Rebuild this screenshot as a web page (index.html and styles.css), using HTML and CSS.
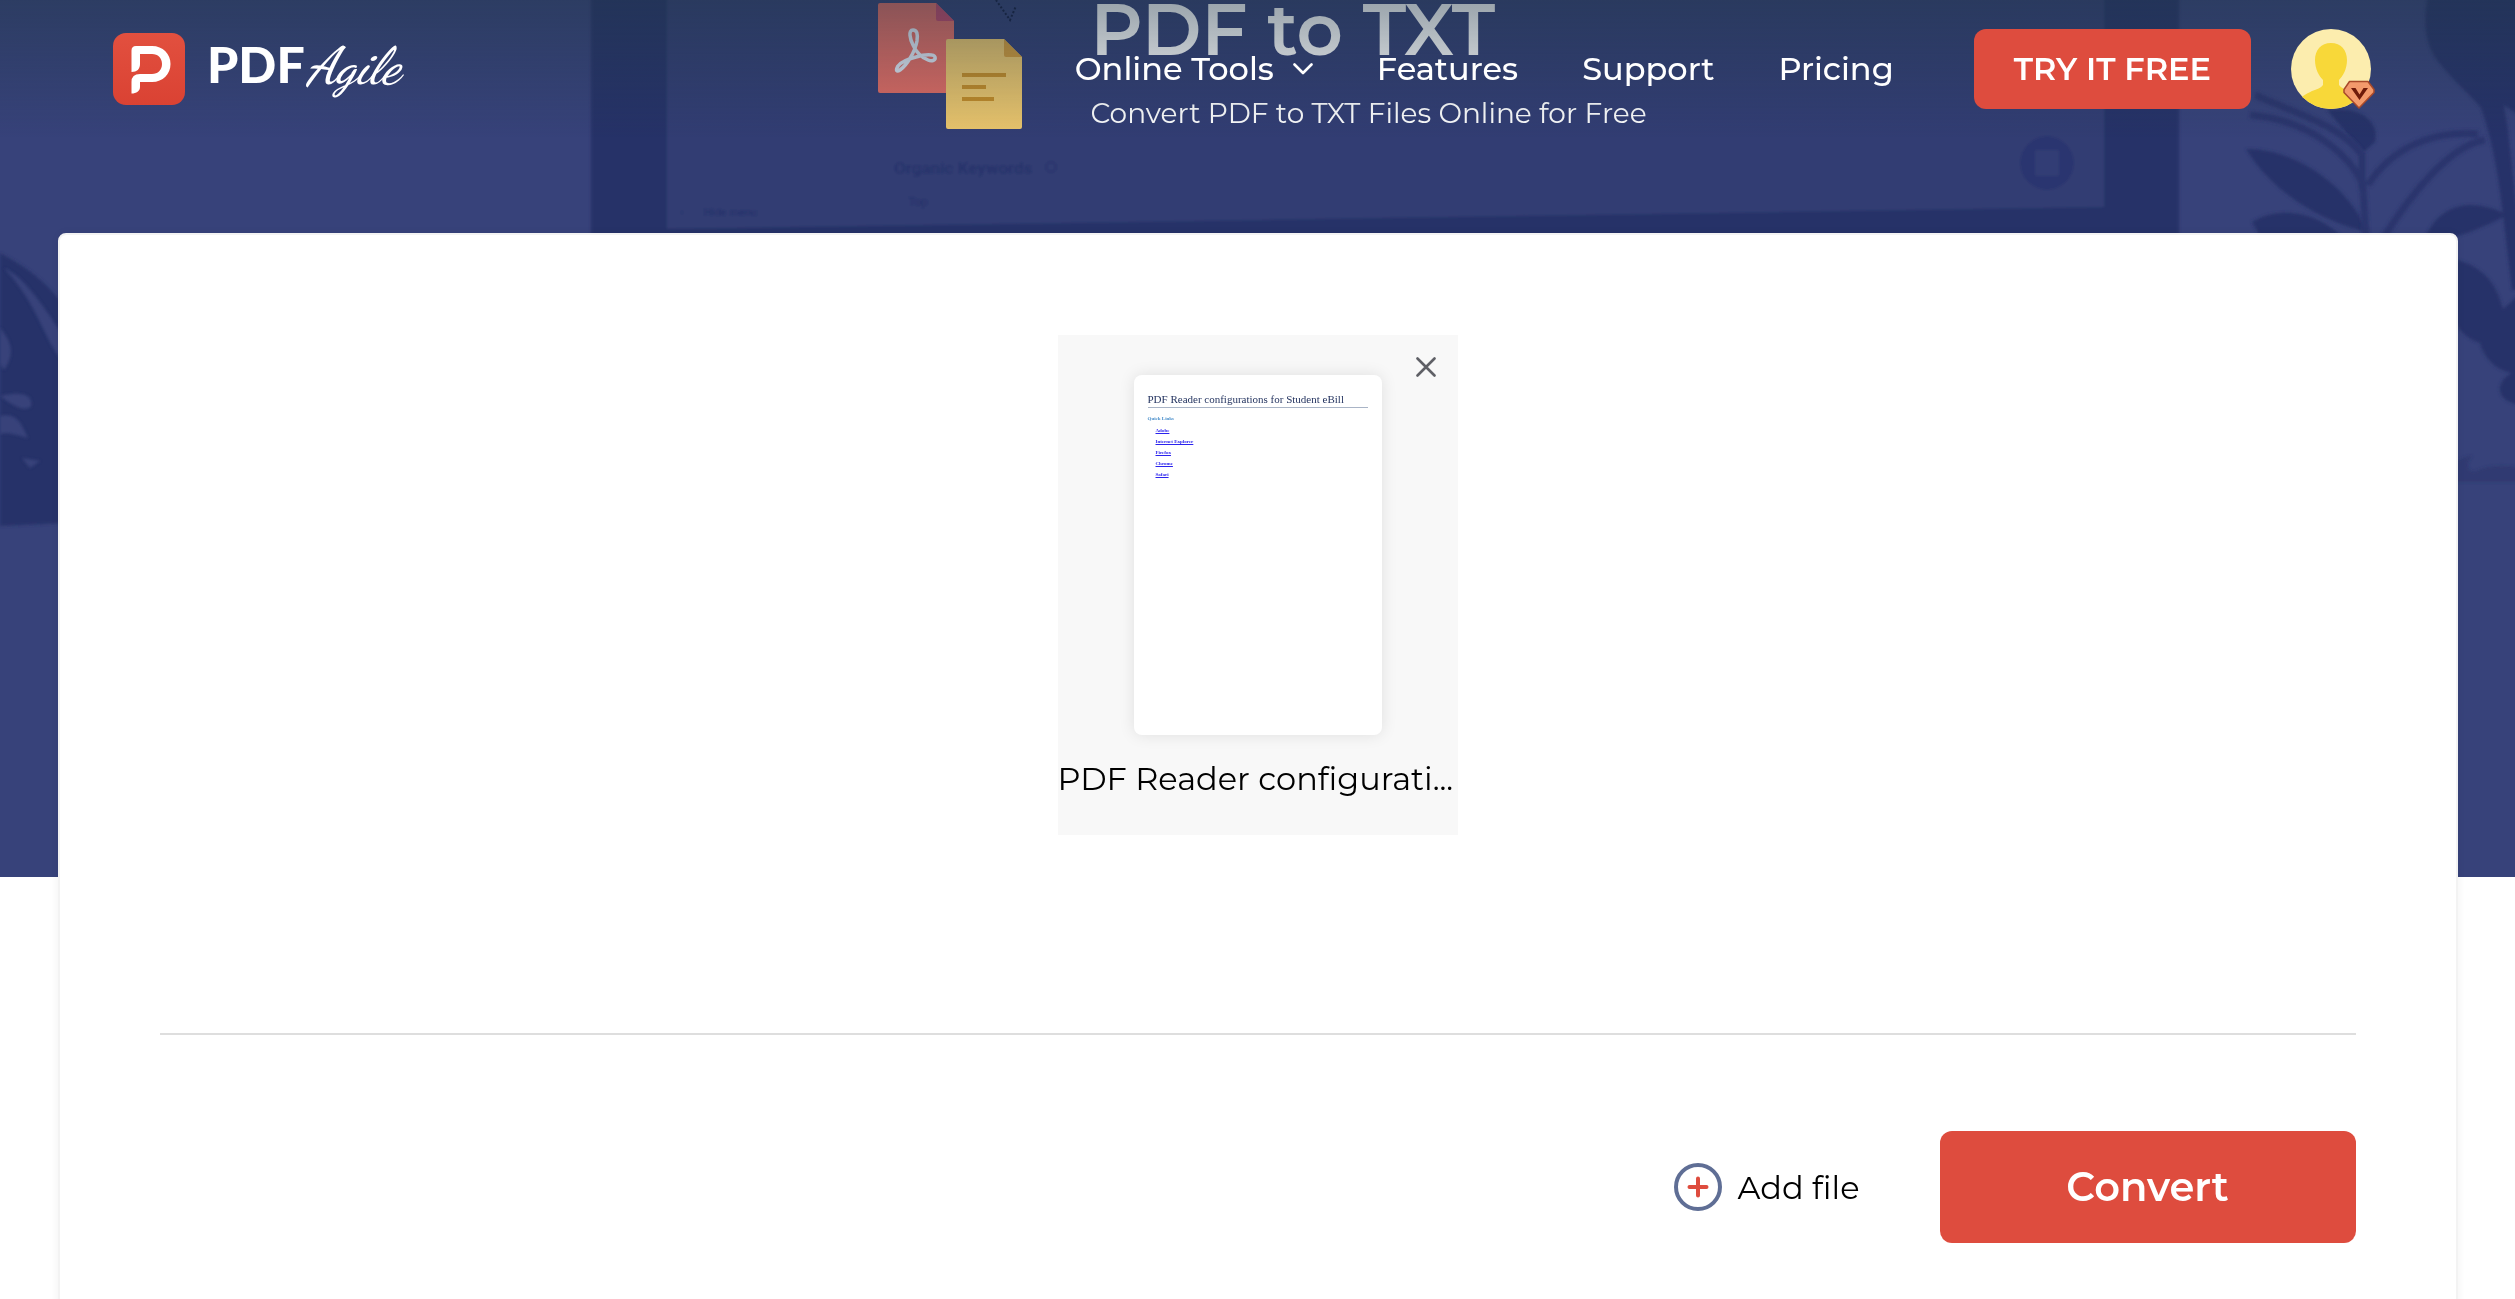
FILE: index.html
```
<!DOCTYPE html>
<html lang="en">
<head>
<meta charset="utf-8">
<meta name="viewport" content="width=device-width, initial-scale=1">
<title>PDF to TXT - PDF Agile</title>
<link rel="stylesheet" href="styles.css">
</head>
<body>
<header class="site-header">
  <a class="brand" href="#" aria-label="PDF Agile home">
    <svg class="brand-mark" viewBox="0 0 72 72" aria-hidden="true">
      <defs><linearGradient id="mark" x1="0" y1="0" x2="0" y2="1"><stop offset="0" stop-color="#e2503f"/><stop offset="1" stop-color="#da4233"/></linearGradient></defs>
      <rect width="72" height="72" rx="13" fill="url(#mark)"/>
      <path fill="#fff" d="M18.500 39V17.500Q18.500 13 23 13H39C50 13 57.500 21 57.500 31S50 49 39 49H27V54C27 58 23.500 60.500 18.500 60.500V49Q18.500 41 27 41H39C45 41 49 37 49 31S45 21 39 21H27V31C27 36 24 39 18.500 39Z"/>
    </svg>
    <span class="brand-name"><span class="brand-pdf">PDF</span><span class="brand-agile">Agile</span></span>
  </a>
  <nav class="main-nav" aria-label="Main">
    <a class="nav-link" href="#">Online Tools
      <svg class="chevron" viewBox="0 0 20 12" aria-hidden="true"><path d="M1.500 1.500 10 10l8.500-8.500" fill="none" stroke="#fff" stroke-width="2.600" stroke-linecap="round" stroke-linejoin="round"/></svg></a>
    <a class="nav-link" href="#">Features</a>
    <a class="nav-link" href="#">Support</a>
    <a class="nav-link" href="#">Pricing</a>
  </nav>
  <button class="try-button" type="button">TRY IT FREE</button>
  <button class="avatar" type="button" aria-label="Account">
    <svg viewBox="0 0 84 80" aria-hidden="true">
      <defs><clipPath id="face"><circle cx="40" cy="40" r="40"/></clipPath></defs>
      <circle cx="40" cy="40" r="40" fill="#fcedae"/>
      <path clip-path="url(#face)" fill="#f8d839" d="M40 14c10 0 16 7 16 17 0 9-4 16-8 20v5c2 3 6 4 11 6 7 3 12 6 14 10v12H7V72c2-4 8-7 14-10 5-2 9-3 11-6v-5c-4-4-8-11-8-20 0-10 6-17 16-17z"/>
      <path d="M58.500 52.500h18.500l6 8v3L68 79 53 63.500v-3z" fill="#f39a6c" stroke="#a8492a" stroke-width="1.500" stroke-linejoin="round"/>
      <path d="M60 59h4.500l4 6.500 4-6.500H77l-8.500 12z" fill="#6e1b0a"/>
    </svg>
  </button>
</header>

<section class="hero">
  <svg class="hero-art" viewBox="0 0 2515 877" preserveAspectRatio="xMidYMin slice" aria-hidden="true">
    <defs><filter id="soft"><feGaussianBlur stdDeviation="1.500"/></filter></defs>
    <g filter="url(#soft)">
      <path fill="#263168" d="M591-10H2179V300H591z"/>
      <path fill="#323c73" d="M667-10H2104V207L667 229z"/>
      <g fill="#28336b" font-family="Roboto, sans-serif" font-weight="700">
        <text x="894" y="174" font-size="17">Organic Keywords</text>
        <circle cx="1051" cy="167" r="5" fill="none" stroke="#28336b" stroke-width="2"/>
        <text x="908" y="206" font-size="12">Top</text>
        <text x="704" y="216" font-size="11">Hide menu</text>
        <text x="680" y="216" font-size="12">‹</text>
      </g>
      <circle cx="2047" cy="163" r="27" fill="#2b3670"/>
      <rect x="2035" y="150" width="24" height="26" rx="3" fill="#323d75"/>
    </g>
    <g fill="#283369" filter="url(#soft)">
      <path d="M2428-5C2422 25 2426 48 2440 64C2455 82 2470 95 2481 108C2494 145 2500 185 2506 240L2512 290H2520V240L2508 130L2504 105L2520 116V-5z"/>
      <path d="M2246 149C2290 148 2345 180 2368 232C2320 222 2270 190 2246 149z"/>
      <path d="M2252 222C2280 205 2320 212 2345 240H2262z"/>
      <path d="M2327 110C2365 105 2380 125 2375 142L2364 152C2350 138 2340 125 2327 110z"/>
      <path d="M2424 240C2440 200 2475 198 2508 215C2480 228 2460 240 2424 240z"/>
      <path d="M2440 256C2480 262 2496 280 2503 309L2520 294V374C2500 374 2484 360 2480 343C2464 338 2456 328 2450 310z"/>
      <path d="M2520 370C2496 376 2490 400 2520 405z"/>
      <path d="M2440 482C2452 462 2462 456 2472 456C2466 464 2466 470 2474 472Q2494 462 2520 468V482H2440z" opacity=".5"/>
      <path d="M0 253C25 266 45 280 66 308V523L0 526z"/>
    </g>
    <g fill="none" stroke="#2b366d" stroke-width="7" filter="url(#soft)">
      <path d="M2250 115C2310 120 2350 155 2363 185L2366 240M2255 95C2300 115 2340 125 2362 155V190M2368 185C2390 150 2430 130 2478 134M2382 240C2410 195 2450 145 2485 140"/>
    </g>
    <g fill="#37427a" filter="url(#soft)">
      <path d="M4 268C24 276 46 310 62 334V360C44 340 38 304 4 268z"/>
      <path d="M0 328C12 342 15 354 4 370L0 364zM0 396C16 392 34 392 31 406C24 414 8 402 0 396zM0 416C18 412 22 426 28 438C14 434 6 432 0 434zM22 458L40 461L30 468z"/>
    </g>
    <path d="M996 0l14 20 6-14" fill="none" stroke="#10183d" stroke-width="2" stroke-dasharray="2 2"/>
  </svg>

  <div class="hero-intro">
    <svg class="format-icons" viewBox="0 0 144 126" aria-hidden="true">
      <path fill="#e06b63" d="M2 0H58L76 18V88q0 2-2 2H2q-2 0-2-2V2q0-2 2-2z"/>
      <path fill="#c14668" d="M58 0L76 18H60q-2 0-2-2z"/>
      <path fill="none" stroke="#dfe7f3" stroke-width="3.500" stroke-linejoin="round" d="M35 27c-5 0-3 9 0 15 3 7 8 12 15 15 4 2 8 0 7-3s-10-3-19 0c-8 2-15 5-18 9-3 5-1 6 2 4 7-5 15-18 17-29 1-7 0-11-4-11z"/>
      <path fill="#eac56c" d="M70 36H126L144 54V124q0 2-2 2H70q-2 0-2-2V38q0-2 2-2z"/>
      <path fill="#d29a38" d="M126 36L144 54H128q-2 0-2-2z"/>
      <path fill="#c48c27" d="M84 70h44v4H84zM84 82h24v4H84zM84 94h32v4H84z"/>
    </svg>
    <div class="hero-copy">
      <h1 class="hero-title">PDF to TXT</h1>
      <p class="hero-subtitle">Convert PDF to TXT Files Online for Free</p>
    </div>
  </div>
</section>

<main class="workspace">
  <div class="files">
    <article class="file-card">
      <button class="remove-file" type="button" aria-label="Remove file">
        <svg viewBox="0 0 20 20" aria-hidden="true"><path d="M1.500 1.500l17 17M18.500 1.500l-17 17" stroke="#5f6066" stroke-width="2.600" stroke-linecap="round"/></svg>
      </button>
      <div class="page-preview">
        <h2 class="page-title">PDF Reader configurations for Student eBill</h2>
        <p class="page-subtitle">Quick Links</p>
        <ul class="page-links">
          <li><a href="#">Adobe</a></li>
          <li><a href="#">Internet Explorer</a></li>
          <li><a href="#">Firefox</a></li>
          <li><a href="#">Chrome</a></li>
          <li><a href="#">Safari</a></li>
        </ul>
      </div>
      <p class="file-name">PDF Reader configurati...</p>
    </article>
  </div>
  <div class="actions">
    <button class="add-button" type="button">
      <svg viewBox="0 0 48 48" aria-hidden="true"><circle cx="24" cy="24" r="22" fill="none" stroke="#5f6e95" stroke-width="4"/><path d="M24 15.500v17M15.500 24h17" stroke="#de4c3e" stroke-width="4" stroke-linecap="round"/></svg>
      Add file
    </button>
    <button class="convert-button" type="button">Convert</button>
  </div>
</main>
</body>
</html>
```
FILE: styles.css
```
* {
  box-sizing: border-box;
}

body {
  margin: 0;
  background: #fff;
  color: #000;
  font-family: Montserrat, Inter, "Open Sans", sans-serif;
  font-size: 32px;
  overflow-x: hidden;
}

h1,
h2,
p,
ul {
  margin: 0;
  padding: 0;
}

a {
  color: inherit;
  text-decoration: none;
}

button {
  border: 0;
  padding: 0;
  background: none;
  color: inherit;
  font: inherit;
}

svg {
  display: block;
}

/* Bar that stays over the hero while the page scrolls */
.site-header {
  position: fixed;
  top: 0;
  left: 0;
  right: 0;
  z-index: 2;
  display: flex;
  align-items: center;
  height: 138px;
  padding: 0 140px 0 113px;
  background: linear-gradient(rgba(33, 55, 72, 0.46), rgba(33, 55, 72, 0));
  color: #fff;
}

.brand {
  display: flex;
  align-items: center;
  margin-right: auto;
}

.brand-mark {
  width: 72px;
  height: 72px;
  margin-right: 22px;
}

.brand-name {
  display: flex;
  align-items: baseline;
  gap: 2px;
  padding-bottom: 8px;
  line-height: 60px;
}

.brand-pdf {
  font-family: Lato, sans-serif;
  font-size: 50px;
  font-weight: 900;
}

.brand-agile {
  font-family: "Dancing Script", "Liberation Serif", serif;
  font-size: 52px;
  font-style: italic;
  font-weight: 600;
}

.main-nav {
  display: flex;
  gap: 64px;
  margin-right: 80px;
}

.nav-link {
  display: flex;
  align-items: center;
  gap: 19px;
  font-weight: 500;
  line-height: 40px;
}

.chevron {
  width: 20px;
  height: 12px;
}

.try-button {
  padding: 0 40px;
  border-radius: 12px;
  background: #de4c3e;
  font-weight: 600;
  line-height: 80px;
}

.avatar {
  width: 84px;
  margin-left: 40px;
}

.hero {
  position: relative;
  height: 877px;
  background: #37427a;
  color: #fff;
  overflow: hidden;
}

.hero-art {
  position: absolute;
  inset: 0;
  width: 100%;
  height: 100%;
}

.hero-intro {
  position: relative;
  display: flex;
  justify-content: center;
  gap: 68px;
  padding: 3px 0 0 10px;
}

.format-icons {
  width: 144px;
  height: 126px;
}

.hero-title {
  font-size: 72px;
  font-weight: 600;
  line-height: 52px;
}

.hero-subtitle {
  padding-top: 40px;
  font-size: 28px;
  line-height: 36px;
}

/* White sheet that overlaps the lower part of the hero */
.workspace {
  position: relative;
  max-width: 2400px;
  min-height: 1200px;
  margin: -644px auto 0;
  padding: 100px;
  border: 2px solid #f3f3f3;
  border-radius: 8px;
  background: #fff;
  box-shadow: 0 0 8px rgba(0, 0, 0, 0.06);
}

.files {
  display: flex;
  justify-content: center;
  padding-bottom: 198px;
  border-bottom: 2px solid #dedede;
}

.file-card {
  position: relative;
  width: 400px;
  height: 500px;
  padding-top: 40px;
  background: #f8f8f8;
}

.remove-file {
  position: absolute;
  top: 22px;
  right: 22px;
  width: 20px;
}

.page-preview {
  width: 248px;
  height: 360px;
  margin: 0 auto;
  padding: 16px 14px;
  border-radius: 8px;
  background: #fff;
  box-shadow: 0 0 16px rgba(0, 0, 0, 0.1);
  font-family: "Liberation Serif", serif;
}

.page-title {
  border-bottom: 1px solid #a9b4c6;
  color: #1f2f5c;
  font-size: 11px;
  font-weight: 400;
  line-height: 16px;
  white-space: nowrap;
}

.page-subtitle {
  padding-top: 5px;
  color: #4a8fcb;
  font-size: 5px;
  font-weight: 700;
  line-height: 12px;
}

.page-links {
  padding-left: 8px;
  color: #2a22ee;
  font-size: 5px;
  font-weight: 700;
  line-height: 11px;
  list-style: none;
}

.page-links a {
  text-decoration: underline;
}

.file-name {
  padding-top: 24px;
  line-height: 40px;
  white-space: nowrap;
}

.actions {
  display: flex;
  justify-content: flex-end;
  align-items: center;
  gap: 80px;
  padding-top: 96px;
}

.add-button {
  display: flex;
  align-items: center;
  gap: 16px;
}

.add-button svg {
  width: 48px;
  height: 48px;
}

.convert-button {
  width: 416px;
  border-radius: 12px;
  background: #de4c3e;
  color: #fff;
  font-size: 40px;
  font-weight: 600;
  line-height: 112px;
}
```
